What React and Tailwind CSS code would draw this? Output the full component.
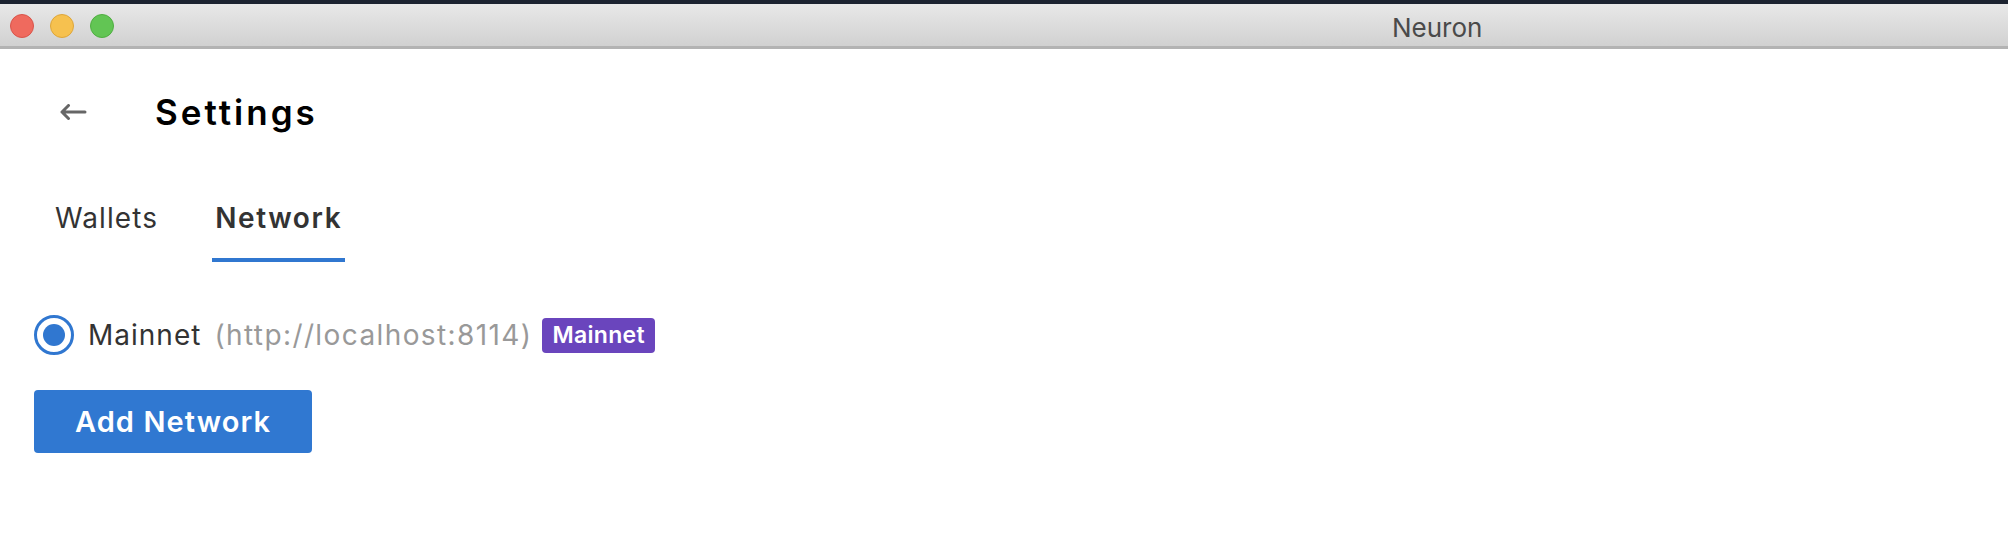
import { useState } from 'react';

const font = { fontFamily: 'Inter, "Liberation Sans", sans-serif' };

const BackArrow = () => (
  <svg width="28" height="16" viewBox="0 0 28 16" fill="none">
    <path d="M26 8H3M9.5 1.5L3 8l6.5 6.5" stroke="#666" strokeWidth="3" strokeLinecap="round" strokeLinejoin="round" />
  </svg>
);

const TitleBar = () => (
  <div className="relative h-[49px] border-t-4 border-[#1c2330] bg-gradient-to-b from-[#e8e8e8] to-[#d1d1d1] border-b-[3px] border-b-[#b3b3b3]">
    <div className="flex items-center gap-[16px] pl-[10px] pt-[10px]">
      <span className="w-[24px] h-[24px] rounded-full bg-[#ef6a5e] border border-[#d9544a]" />
      <span className="w-[24px] h-[24px] rounded-full bg-[#f6c14f] border border-[#dea63a]" />
      <span className="w-[24px] h-[24px] rounded-full bg-[#62c554] border border-[#4fae41]" />
    </div>
    <div className="absolute left-[1392px] top-[9px] text-[26px] leading-[30px] text-[#4a4a4a]">
      Neuron
    </div>
  </div>
);

const App = () => {
  const [tab, setTab] = useState('network');

  return (
    <div className="w-[2008px] h-[534px] bg-white overflow-hidden" style={font}>
      <TitleBar />

      <div className="flex items-center mt-[43px] h-[40px]">
        <div className="ml-[59px] w-[96px]">
          <BackArrow />
        </div>
        <h1 className="text-[35px] leading-[40px] font-semibold text-black tracking-[3px]">Settings</h1>
      </div>

      <div className="flex gap-[51px] ml-[52px] mt-[69px]">
        <button
          onClick={() => setTab('wallets')}
          className={`px-[3px] pb-[23px] text-[28px] leading-[34px] border-b-4 ${tab === 'wallets' ? 'font-semibold text-[#333] tracking-[1.8px] border-[#3077d0]' : 'text-[#333] tracking-[1.1px] border-transparent'}`}
        >
          Wallets
        </button>
        <button
          onClick={() => setTab('network')}
          className={`px-[3px] pb-[23px] text-[28px] leading-[34px] border-b-4 ${tab === 'network' ? 'font-semibold text-[#333] tracking-[1.6px] border-[#3077d0]' : 'text-[#333] tracking-[1.1px] border-transparent'}`}
        >
          Network
        </button>
      </div>

      <div className="flex items-center ml-[34px] mt-[53px] h-[40px]">
        <span className="w-[40px] h-[40px] rounded-full border-[3px] border-[#3077d0] flex items-center justify-center">
          <span className="w-[22px] h-[22px] rounded-full bg-[#3077d0]" />
        </span>
        <span className="ml-[14px] text-[28px] leading-[34px] text-[#333] tracking-[1px]">Mainnet</span>
        <span className="ml-[13px] text-[28px] leading-[34px] text-[#999] tracking-[1.4px]">(http://localhost:8114)</span>
        <span className="ml-[10px] h-[35px] px-[10px] rounded-[4px] bg-[#6a45bd] text-white text-[23px] leading-[35px] font-semibold tracking-[0.3px]">
          Mainnet
        </span>
      </div>

      <button className="mt-[35px] ml-[34px] w-[278px] h-[63px] rounded-[4px] bg-[#3078d1] text-white text-[29px] font-semibold tracking-[1.1px]">
        Add Network
      </button>
    </div>
  );
};

export default App;
